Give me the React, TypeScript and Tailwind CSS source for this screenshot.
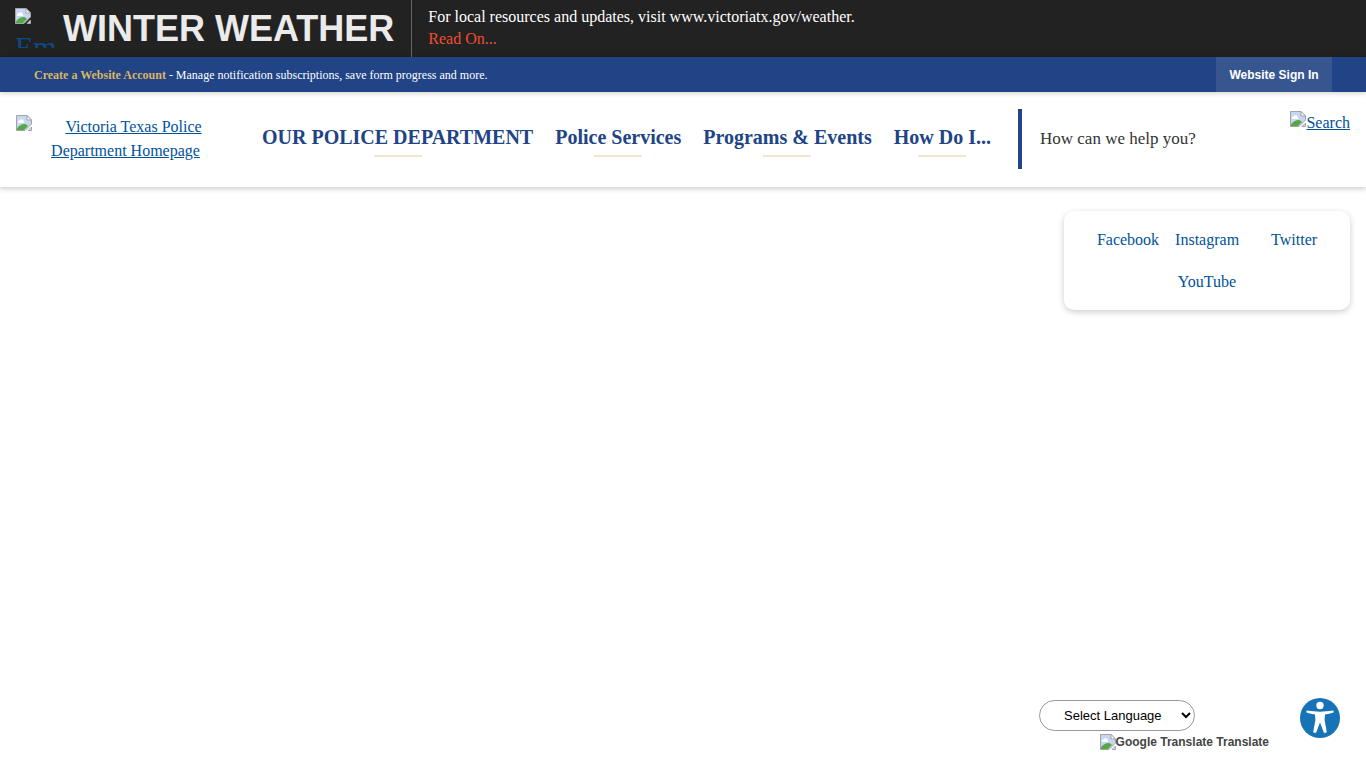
import { useState } from 'react';

const NAV_ITEMS = ['OUR POLICE DEPARTMENT', 'Police Services', 'Programs & Events', 'How Do I...'];
const SOCIAL_LINKS = ['Facebook', 'Instagram', 'Twitter', 'YouTube'];

function MissingImage() {
  return (
    <svg viewBox="0 0 16 16" className="h-4 w-4 shrink-0" aria-hidden="true">
      <path d="M0.5 0.5H11L15.5 5V9L9 15.5H0.5Z" fill="#c6d6f4" stroke="#a3a3a3" />
      <path d="M2 7.500a2 2 0 0 1 2-2.500a2 2 0 0 1 3.500 1A1.500 1.500 0 0 1 8 8H2Z" fill="#fff" />
      <path d="M1 15v-1.500c2-3 4.500-4.500 7.500-4.500q2 0 3.500 2L8 15Z" fill="#56a845" />
      <path d="M11 0.500V5h4.500Z" fill="#fff" stroke="#a3a3a3" />
      <path d="M12 15.500h3.500V12Z" fill="#d7e3f8" stroke="#a3a3a3" />
    </svg>
  );
}

function AlertBar() {
  return (
    <section className="flex h-[57px] bg-[#222]">
      <div className="flex border-r border-[#666] pr-[17px] pl-[15px]">
        <a
          href="#alert"
          aria-label="Emergency Alert"
          className="mt-2 block h-10 w-10 overflow-hidden text-[30px] leading-8 text-[#0a4a85]"
        >
          <MissingImage />
          <span className="mt-[7px] block">Em</span>
        </a>
        <h2 className="ml-2 font-['Liberation_Sans',Arial,sans-serif] text-4xl leading-[57px] font-bold whitespace-nowrap text-[#ebebeb]">
          WINTER WEATHER
        </h2>
      </div>
      <div className="pt-1.5 pl-4 text-base leading-[22px] text-white">
        <p>For local resources and updates, visit www.victoriatx.gov/weather.</p>
        <a href="#read-on" className="text-[#f04e30]">
          Read On...
        </a>
      </div>
    </section>
  );
}

function AccountBar() {
  return (
    <section className="relative flex h-[35px] items-stretch justify-between bg-[#204485] px-[34px] text-xs text-white shadow-[0_1px_5px_rgba(0,0,0,0.2)]">
      <p className="self-center">
        <a href="#account" className="font-bold text-[#dcb563]">
          Create a Website Account
        </a>{' '}
        - Manage notification subscriptions, save form progress and more.
      </p>
      <button
        type="button"
        className="w-[116px] bg-[#37568f] font-['Liberation_Sans',Arial,sans-serif] text-xs font-bold"
      >
        Website Sign In
      </button>
    </section>
  );
}

function Header() {
  const [query, setQuery] = useState('');

  return (
    <header className="flex h-[95px] items-start px-4 shadow-[0_2px_5px_rgba(0,0,0,0.2)]">
      <a
        href="#home"
        className="mt-[23px] flex w-[220px] shrink-0 items-start text-base text-[#00529b] underline"
      >
        <MissingImage />
        <span className="w-[187px] text-center">
          <span className="pl-4">Victoria Texas Police</span> Department Homepage
        </span>
      </a>
      <nav className="ml-[26px] flex gap-[22px] pt-8 text-xl leading-[26px] font-bold whitespace-nowrap text-[#204485]">
        {NAV_ITEMS.map((item) => (
          <a key={item} href="#nav" className="flex flex-col items-center">
            {item}
            <span className="mt-[5px] h-0.5 w-12 bg-[#f4e5cf]" />
          </a>
        ))}
      </nav>
      <form className="mt-[17px] ml-auto flex h-[60px] w-[332px] items-start border-l-4 border-[#204485]">
        <input
          type="text"
          aria-label="Search"
          placeholder="How can we help you?"
          value={query}
          onChange={(e) => setQuery(e.target.value)}
          className="h-[60px] min-w-0 flex-1 pl-[18px] text-[17px] outline-none placeholder:text-[#333]"
        />
        <a href="#search" className="mt-0.5 flex text-base text-[#00529b]">
          <MissingImage />
          <span className="underline">Search</span>
        </a>
      </form>
    </header>
  );
}

function SocialLinks() {
  return (
    <aside className="mt-6 mr-4 ml-auto flex w-[286px] flex-wrap justify-center gap-x-4 gap-y-[18px] rounded-[10px] px-5 pt-[17px] pb-4 text-base text-[#00529b] shadow-[0_2px_6px_rgba(0,0,0,0.2)]">
      {SOCIAL_LINKS.map((name) => (
        <a key={name} href="#social" className={name === 'Twitter' ? 'pl-4' : ''}>
          {name}
        </a>
      ))}
    </aside>
  );
}

function TranslateWidget() {
  return (
    <div className="w-[230px] font-['Liberation_Sans',Arial,sans-serif]">
      <select
        aria-label="Language"
        className="block h-[31px] w-[156px] rounded-full border border-[#999] bg-white pl-5 text-[13px] text-black"
      >
        <option>Select Language</option>
      </select>
      <a
        href="#translate"
        className="mt-[3px] flex justify-end text-xs leading-4 font-bold whitespace-nowrap text-[#444]"
      >
        <MissingImage />
        Google Translate Translate
      </a>
    </div>
  );
}

export default function App() {
  return (
    <div className="flex min-h-screen flex-col bg-white font-['Liberation_Serif','Times_New_Roman',serif]">
      <AlertBar />
      <AccountBar />
      <Header />
      <main className="flex-1">
        <SocialLinks />
      </main>
      <footer className="flex items-start justify-end gap-[31px] pr-[26px] pb-[18px]">
        <TranslateWidget />
        <button type="button" aria-label="Accessibility" className="-mt-0.5 h-10 w-10">
          <svg viewBox="0 0 40 40" className="h-10 w-10">
            <circle cx="20" cy="20" r="20" fill="#1773b5" />
            <circle cx="20" cy="7.500" r="3.700" fill="#fff" />
            <path
              d="M7.500 12.500C15 14 25 14 32.500 12.500Q34.300 12.500 33.500 14.500Q29 16 25 16.500L24.600 22L26.800 34Q25.500 35.500 23.800 34.500L20 24.500L16.200 34.500Q14.500 35.500 13.200 34L15.400 22L15 16.500Q11 16 6.500 14.500Q5.700 12.500 7.500 12.500Z"
              fill="#fff"
            />
          </svg>
        </button>
      </footer>
    </div>
  );
}
